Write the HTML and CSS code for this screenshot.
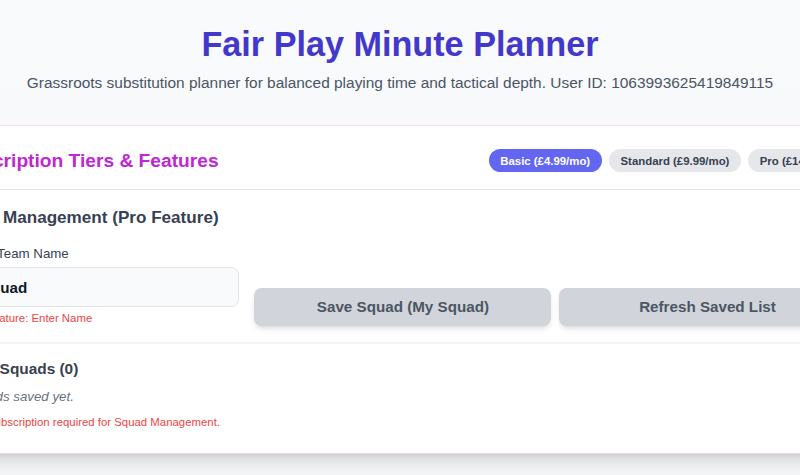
FILE: index.html
```html
<!DOCTYPE html>
<html lang="en">
<head>
<meta charset="utf-8">
<title>Fair Play Minute Planner</title>
<link rel="stylesheet" href="styles.css">
</head>
<body>
<div class="app">
  <header class="page-header">
    <h1 class="title">Fair Play Minute Planner</h1>
    <p class="subtitle">Grassroots substitution planner for balanced playing time and tactical depth. User ID: 1063993625419849115</p>
  </header>

  <main class="card">
    <section class="tiers">
      <h2 class="tiers-title">Subscription Tiers &amp; Features</h2>
      <div class="pills">
        <span class="pill pill-active">Basic (£4.99/mo)</span>
        <span class="pill">Standard (£9.99/mo)</span>
        <span class="pill">Pro (£14.99/mo)</span>
      </div>
    </section>

    <section class="squad">
      <h3 class="section-title">Squad Management (Pro Feature)</h3>
      <div class="squad-grid">
        <div class="field">
          <label class="field-label" for="team">Squad's Team Name</label>
          <input id="team" class="field-input" type="text" value="My Squad">
          <p class="field-error"><svg class="lock" viewBox="0 0 12 12" aria-hidden="true"><rect x="2" y="5" width="8" height="6" rx="1" fill="#ef4444"/><path d="M4 5V3.5a2 2 0 0 1 4 0V5" fill="none" stroke="#ef4444" stroke-width="1.3"/></svg>Pro Feature: Enter Name</p>
        </div>
        <div class="actions">
          <button class="btn" type="button">Save Squad (My Squad)</button>
          <button class="btn" type="button">Refresh Saved List</button>
        </div>
      </div>
    </section>

    <section class="saved">
      <h3 class="section-title saved-title">Saved Squads (0)</h3>
      <p class="empty">No squads saved yet.</p>
      <p class="notice"><svg class="lock" viewBox="0 0 12 12" aria-hidden="true"><rect x="2" y="5" width="8" height="6" rx="1" fill="#ef4444"/><path d="M4 5V3.5a2 2 0 0 1 4 0V5" fill="none" stroke="#ef4444" stroke-width="1.3"/></svg>Pro subscription required for Squad Management.</p>
    </section>
  </main>
</div>
</body>
</html>
```

FILE: styles.css
```css
* { box-sizing: border-box; }

html, body {
  margin: 0;
  padding: 0;
}

body {
  min-height: 475px;
  background: linear-gradient(180deg, #f8fafc 0%, #f7f8fa 70%, #f3f4f6 100%);
  font-family: "Liberation Sans", Arial, sans-serif;
  color: #374151;
  overflow: hidden;
}

.app {
  width: 800px;
  display: flex;
  flex-direction: column;
}

.page-header {
  text-align: center;
  padding: 24px 0 31px;
}

.title {
  margin: 0;
  font-size: 34.2px;
  line-height: 40px;
  font-weight: 700;
  color: #4338ca;
}

.subtitle {
  margin: 7px 0 0;
  font-size: 15.45px;
  line-height: 23px;
  color: #4b5563;
  white-space: nowrap;
}

.card {
  margin: 0 -80px 0 -78px;
  background: #ffffff;
  border: 1px solid #f3ddf8;
  border-bottom-color: #e6dcf0;
  border-radius: 12px;
  box-shadow: 0 10px 15px -3px rgba(0,0,0,0.12), 0 4px 6px -4px rgba(0,0,0,0.12);
}

.tiers {
  display: flex;
  align-items: center;
  justify-content: space-between;
  padding: 23px 23px 17px;
  border-bottom: 1px solid #e5e7eb;
}

.tiers-title {
  margin: 0;
  font-size: 19.2px;
  line-height: 23px;
  font-weight: 700;
  color: #c026d3;
}

.pills {
  display: flex;
  gap: 7.6px;
}

.pill {
  display: inline-flex;
  align-items: center;
  height: 23px;
  padding: 0 11.4px;
  border-radius: 9999px;
  background: #e5e7eb;
  color: #374151;
  font-size: 11.4px;
  font-weight: 700;
}

.pill-active {
  background: #6366f1;
  color: #ffffff;
}

.squad {
  padding: 16px 23px 16px;
  border-bottom: 2px solid #f3f4f6;
}

.section-title {
  margin: 0 0 14.5px;
  font-size: 17.1px;
  line-height: 23px;
  font-weight: 700;
  color: #374151;
}

.squad-grid {
  display: grid;
  grid-template-columns: repeat(3, 1fr);
  column-gap: 15.2px;
  align-items: end;
}

.field {
  display: flex;
  flex-direction: column;
}

.field-label {
  font-size: 13.3px;
  line-height: 19px;
  color: #374151;
  margin-bottom: 4.5px;
}

.field-input {
  height: 40px;
  padding: 0 11.4px 0 8.5px;
  border: 1px solid #e2e4e8;
  border-radius: 7.6px;
  background: #f9fafb;
  font-family: inherit;
  font-size: 15.2px;
  font-weight: 700;
  color: #111827;
}

.field-error {
  margin: 3.5px 0 0;
  font-size: 11.4px;
  line-height: 15px;
  color: #ef4444;
}

.field-error .lock {
  margin-right: 8px;
}

.lock {
  width: 11px;
  height: 11px;
  margin-right: 11px;
  vertical-align: -1px;
}

.actions {
  grid-column: span 2;
  display: flex;
  gap: 7.6px;
}

.btn {
  flex: 1;
  height: 38px;
  border: none;
  border-radius: 7.6px;
  background: #d1d5db;
  color: #4b5563;
  font-family: inherit;
  font-size: 15.2px;
  font-weight: 700;
  box-shadow: 0 4px 6px -1px rgba(0,0,0,0.1), 0 2px 4px -2px rgba(0,0,0,0.1);
}

.saved {
  padding: 13px 23px 23px;
}

.saved-title {
  margin-bottom: 7px;
  padding-left: 4px;
  font-size: 15.4px;
}

.empty {
  margin: 0;
  font-size: 13.3px;
  line-height: 19px;
  font-style: italic;
  color: #6b7280;
}

.notice {
  margin: 9px 0 0;
  font-size: 11.4px;
  line-height: 15px;
  color: #ef4444;
}
```
